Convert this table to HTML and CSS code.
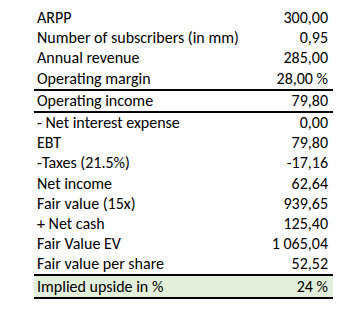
FILE: index.html
```html
<!DOCTYPE html>
<html>
<head>
<meta charset="utf-8">
<link rel="stylesheet" href="styles.css">
</head>
<body>
<div class="sheet">
  <div class="row"><span class="label">ARPP</span><span class="val">300,00</span></div>
  <div class="row"><span class="label">Number of subscribers (in mm)</span><span class="val">0,95</span></div>
  <div class="row"><span class="label">Annual revenue</span><span class="val">285,00</span></div>
  <div class="row"><span class="label">Operating margin</span><span class="val">28,00 %</span></div>
  <div class="rule"></div>
  <div class="row"><span class="label">Operating income</span><span class="val">79,80</span></div>
  <div class="rule"></div>
  <div class="row"><span class="label">- Net interest expense</span><span class="val">0,00</span></div>
  <div class="row"><span class="label">EBT</span><span class="val">79,80</span></div>
  <div class="row"><span class="label">-Taxes (21.5%)</span><span class="val">-17,16</span></div>
  <div class="row"><span class="label">Net income</span><span class="val">62,64</span></div>
  <div class="row"><span class="label">Fair value (15x)</span><span class="val">939,65</span></div>
  <div class="row"><span class="label">+ Net cash</span><span class="val">125,40</span></div>
  <div class="row"><span class="label">Fair Value EV</span><span class="val">1 065,04</span></div>
  <div class="row"><span class="label">Fair value per share</span><span class="val">52,52</span></div>
  <div class="rule"></div>
  <div class="row highlight"><span class="label">Implied upside in %</span><span class="val">24 %</span></div>
  <div class="rule"></div>
</div>
</body>
</html>
```
FILE: styles.css
```css
html, body {
  margin: 0;
  padding: 0;
  background: #ffffff;
}
body {
  padding: 8px 0 0 34px;
  font-family: Carlito, Lato, "Liberation Sans", sans-serif;
  font-size: 16px;
  color: #000000;
}
.sheet {
  width: 299px;
  display: flex;
  flex-direction: column;
}
.row {
  height: 20.2px;
  display: flex;
  justify-content: space-between;
  align-items: center;
  padding: 0 5px 0 3px;
  line-height: 1;
}
.rule {
  height: 2px;
  background: #000000;
}
.highlight {
  background: #e2efda;
}
```
